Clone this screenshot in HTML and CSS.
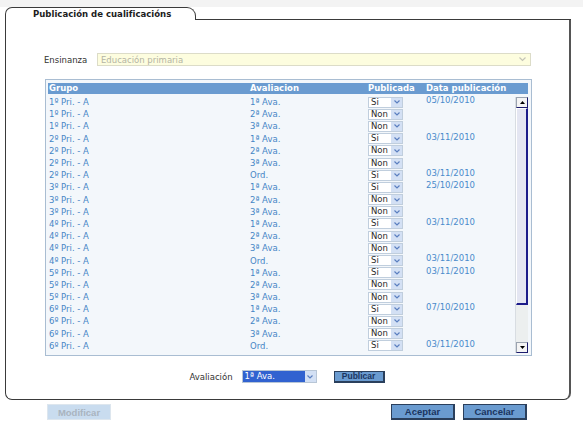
FILE: index.html
```html
<!DOCTYPE html>
<html lang="gl">
<head>
<meta charset="UTF-8">
<title>Publicación de cualificacións</title>
<link rel="stylesheet" href="styles.css">
</head>
<body>
<div class="topbar"></div>
<div class="frame">
    <div class="tabs">
        <div class="tab">Publicación de cualificacións</div>
        <div class="tab-fill"></div>
    </div>
    <div class="panel">
        <div class="field-row">
            <label class="field-label">Ensinanza</label>
            <div class="big-select">
                <span>Educación primaria</span>
                <svg width="7" height="5" viewBox="0 0 7 5"><polyline points="0.5,0.5 3.5,3.5 6.5,0.5" fill="none" stroke="#c4c4b8" stroke-width="1.2"/></svg>
            </div>
        </div>

        <div class="grid-box">
            <div class="grid-head">
                <span>Grupo</span>
                <span>Avaliacion</span>
                <span>Publicada</span>
                <span>Data publicación</span>
            </div>
            <div class="grid-main">
                <div class="grid-rows" id="rows"></div>
                <div class="scrollbar">
                    <div class="sb-btn"><svg width="5" height="3" viewBox="0 0 5 3"><polygon points="0,3 2.5,0 5,3" fill="#000"/></svg></div>
                    <div class="sb-thumb"></div>
                    <div class="sb-track"></div>
                    <div class="sb-btn"><svg width="5" height="3" viewBox="0 0 5 3"><polygon points="0,0 2.5,3 5,0" fill="#000"/></svg></div>
                </div>
            </div>
        </div>

        <div class="action-row">
            <label class="field-label">Avaliación</label>
            <div class="small-select active">
                <span class="sel-val">1ª Ava.</span>
                <span class="sel-btn"><svg width="6" height="4" viewBox="0 0 6 4"><polyline points="0.5,0.5 3,3 5.5,0.5" fill="none" stroke="#5b7fc0" stroke-width="1.2"/></svg></span>
            </div>
            <button class="btn btn-small">Publicar</button>
        </div>
    </div>
    <div class="footer">
        <button class="btn btn-disabled" disabled>Modificar</button>
        <div class="footer-right">
            <button class="btn">Aceptar</button>
            <button class="btn">Cancelar</button>
        </div>
    </div>
</div>

<script>
    const data = [
        ['1º Pri. - A', '1ª Ava.', 'Si', '05/10/2010'],
        ['1º Pri. - A', '2ª Ava.', 'Non', ''],
        ['1º Pri. - A', '3ª Ava.', 'Non', ''],
        ['2º Pri. - A', '1ª Ava.', 'Si', '03/11/2010'],
        ['2º Pri. - A', '2ª Ava.', 'Non', ''],
        ['2º Pri. - A', '3ª Ava.', 'Non', ''],
        ['2º Pri. - A', 'Ord.', 'Si', '03/11/2010'],
        ['3º Pri. - A', '1ª Ava.', 'Si', '25/10/2010'],
        ['3º Pri. - A', '2ª Ava.', 'Non', ''],
        ['3º Pri. - A', '3ª Ava.', 'Non', ''],
        ['4º Pri. - A', '1ª Ava.', 'Si', '03/11/2010'],
        ['4º Pri. - A', '2ª Ava.', 'Non', ''],
        ['4º Pri. - A', '3ª Ava.', 'Non', ''],
        ['4º Pri. - A', 'Ord.', 'Si', '03/11/2010'],
        ['5º Pri. - A', '1ª Ava.', 'Si', '03/11/2010'],
        ['5º Pri. - A', '2ª Ava.', 'Non', ''],
        ['5º Pri. - A', '3ª Ava.', 'Non', ''],
        ['6º Pri. - A', '1ª Ava.', 'Si', '07/10/2010'],
        ['6º Pri. - A', '2ª Ava.', 'Non', ''],
        ['6º Pri. - A', '3ª Ava.', 'Non', ''],
        ['6º Pri. - A', 'Ord.', 'Si', '03/11/2010']
    ];

    const rows = document.getElementById('rows');
    const arrow = '<svg width="6" height="4" viewBox="0 0 6 4"><polyline points="0.5,0.5 3,3 5.5,0.5" fill="none" stroke="#5b7fc0" stroke-width="1.2"/></svg>';

    data.forEach(r => {
        const row = document.createElement('div');
        row.className = 'grid-row';
        row.innerHTML =
            `<span>${r[0]}</span>` +
            `<span>${r[1]}</span>` +
            `<span class="small-select"><span class="sel-val">${r[2]}</span><span class="sel-btn">${arrow}</span></span>` +
            `<span class="date">${r[3]}</span>`;
        rows.appendChild(row);
    });
</script>
</body>
</html>
```

FILE: styles.css
```css
body {
    margin: 0;
    background-color: #fff;
    font-family: "DejaVu Sans", Verdana, sans-serif;
    font-size: 8.5px;
    color: #333;
}

.topbar {
    height: 7px;
    background-color: #f3f3f3;
}

.frame {
    width: 566px;
    margin-left: 5px;
}

/* tab strip */
.tabs {
    display: flex;
    height: 13px;
}

.tab {
    width: 162px;
    padding-left: 27px;
    border: 1px solid #3a3a3a;
    border-bottom: none;
    border-radius: 7px 9px 0 0;
    font-family: "DejaVu Sans Condensed", "DejaVu Sans", sans-serif;
    font-stretch: condensed;
    font-weight: bold;
    font-size: 9.5px;
    line-height: 12px;
    color: #1c1c1c;
}

.tab-fill {
    flex: 1;
    border-bottom: 1px solid #3a3a3a;
}

.panel {
    height: 380px;
    border: 1px solid #3a3a3a;
    border-top: none;
    border-right: 2px solid #555;
    border-radius: 0 0 7px 7px;
    padding: 33px 37px 0 38px;
    box-sizing: border-box;
}

.field-row {
    display: flex;
    align-items: center;
    height: 13px;
}

.field-label {
    color: #333;
}

.field-row .field-label {
    width: 53px;
}

.big-select {
    width: 434px;
    height: 13px;
    box-sizing: border-box;
    border: 1px solid #dcdcc8;
    background-color: #fdfddf;
    color: #b4b4a4;
    display: flex;
    align-items: center;
    justify-content: space-between;
    padding: 0 4px 0 3px;
}

/* grid */
.grid-box {
    margin: 13px 0 0 1px;
    width: 487px;
    height: 277px;
    box-sizing: border-box;
    border: 1px solid #a9bdd2;
    background-color: #f3f7fb;
    padding: 3px 3px 0 2px;
}

.grid-head,
.grid-row {
    display: grid;
    grid-template-columns: 201px 118px 58px 1fr;
    padding-left: 1px;
}

.grid-head {
    height: 11px;
    line-height: 11px;
    background-color: #6a9bd0;
    color: #fff;
    font-weight: bold;
}

.grid-main {
    display: flex;
    margin-top: 2px;
}

.grid-rows {
    flex: 1;
}

.grid-row {
    height: 12.2px;
    align-items: center;
    color: #4686c6;
}

.date {
    color: #4a8bcb;
    align-self: start;
    line-height: 9px;
}

.small-select {
    display: flex;
    width: 35px;
    height: 11px;
    box-sizing: border-box;
    border: 1px solid #c0cedd;
    background-color: #fff;
    color: #2a2a2a;
}

.sel-val {
    flex: 1;
    padding-left: 2px;
    line-height: 9px;
}

.sel-btn {
    width: 11px;
    background-color: #d3e0f4;
    display: flex;
    align-items: center;
    justify-content: center;
}

/* fake scrollbar */
.scrollbar {
    width: 12px;
    height: 256px;
    margin-top: 1px;
    display: flex;
    flex-direction: column;
    background-color: #ecefef;
    border-left: 1px solid #d8dde2;
}

.sb-btn {
    height: 11px;
    box-sizing: border-box;
    border: 1px solid #9aa3b0;
    border-right-color: #1c1c6e;
    border-bottom-color: #1c1c6e;
    background-color: #f4f4f4;
    display: flex;
    align-items: center;
    justify-content: center;
}

.sb-thumb {
    height: 197px;
    box-sizing: border-box;
    background-color: #e4e6f2;
    border: 1px solid #fff;
    border-right: 2px solid #1c1c8a;
    border-bottom: 2px solid #1c1c8a;
}

.sb-track {
    flex: 1;
}

/* bottom */
.action-row {
    display: flex;
    align-items: center;
    justify-content: center;
    margin-top: 14px;
    height: 13px;
    padding-right: 2px;
}

.action-row .field-label {
    margin-right: 9px;
}

.action-row .small-select {
    width: 75px;
    height: 13px;
    margin-right: 17px;
    border-color: #b8c6d6;
}

.small-select.active .sel-val {
    background-color: #3162d0;
    color: #fff;
    line-height: 11px;
}

.btn {
    font-family: "Liberation Sans", Arial, sans-serif;
    font-weight: bold;
    font-size: 9.5px;
    color: #1b3560;
    background-color: #6a9bd0;
    border: 1px solid #2a3f5c;
    border-right-width: 2px;
    border-bottom-width: 2px;
    width: 64px;
    height: 16px;
    padding: 0;
}

.btn-small {
    width: 51px;
    height: 12px;
    font-size: 8.5px;
    line-height: 9px;
}

.btn-disabled {
    background-color: #c9dcef;
    border: 1px solid #dde6ee;
    color: #a9b4bf;
}

.footer {
    display: flex;
    justify-content: space-between;
    padding: 4px 44px 0 42px;
}

.footer-right {
    display: flex;
    gap: 8px;
}
```
